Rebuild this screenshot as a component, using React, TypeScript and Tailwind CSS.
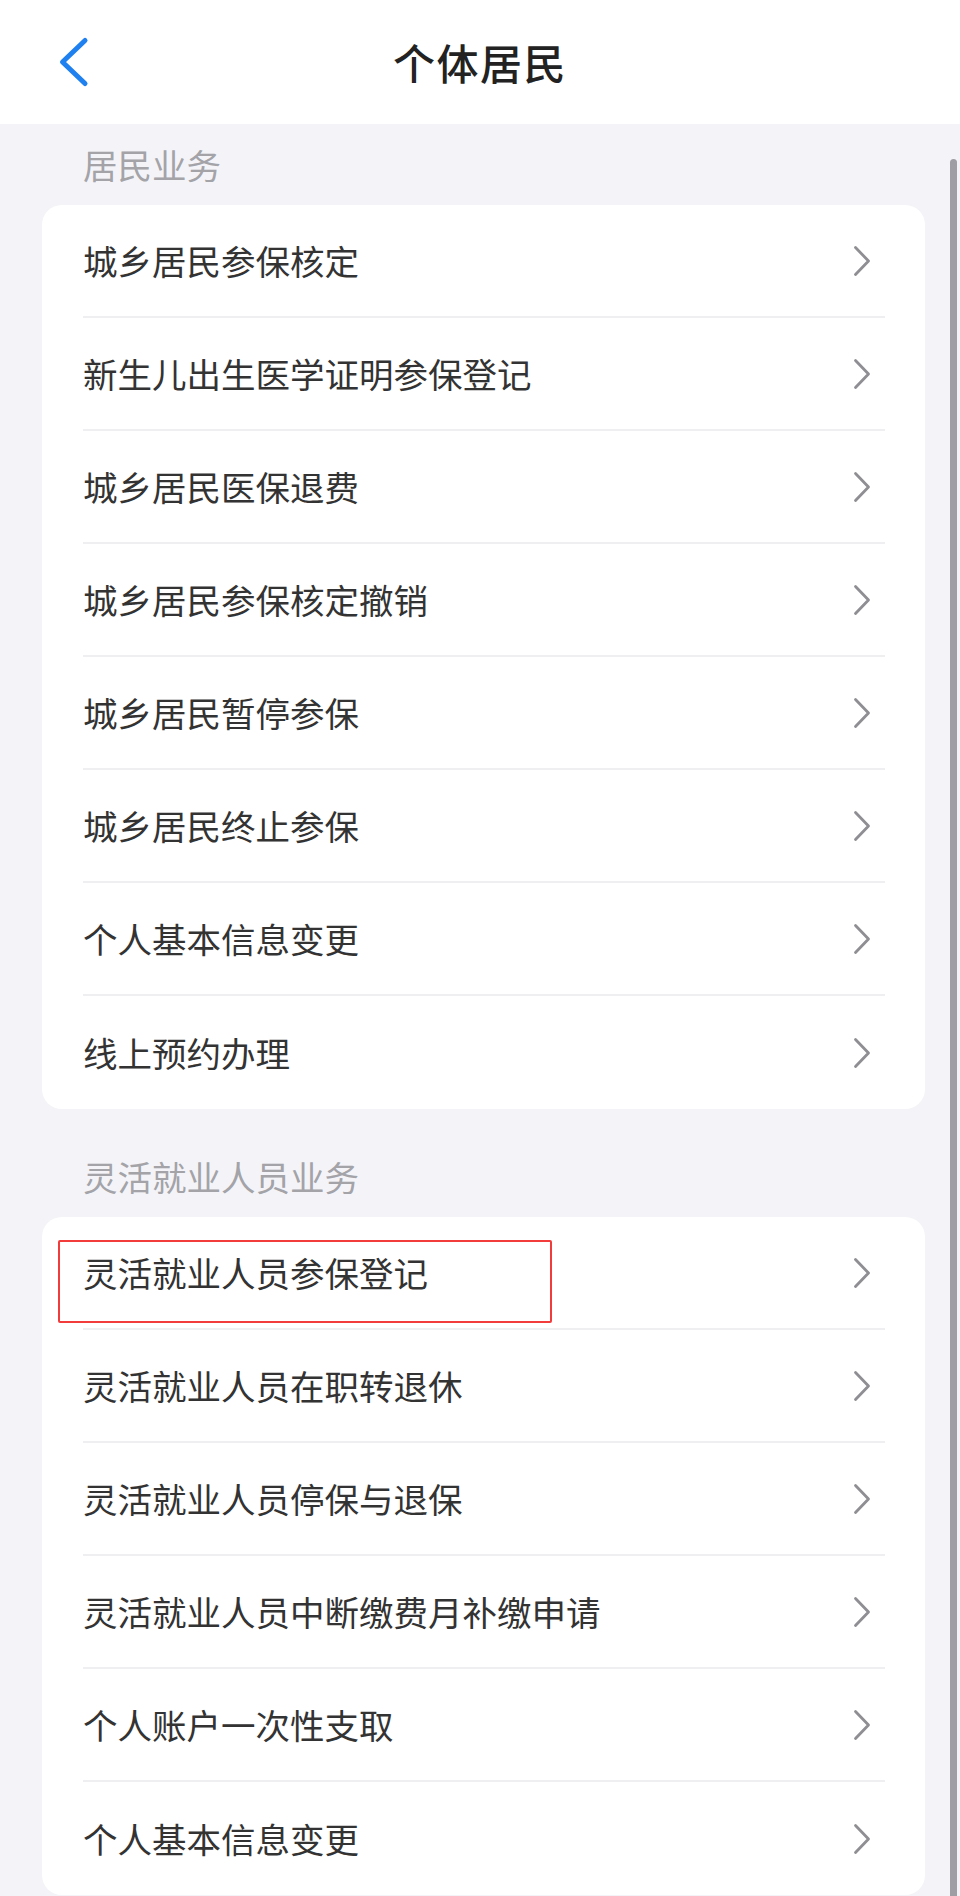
import React from 'react';

const residentItems = [
  '城乡居民参保核定',
  '新生儿出生医学证明参保登记',
  '城乡居民医保退费',
  '城乡居民参保核定撤销',
  '城乡居民暂停参保',
  '城乡居民终止参保',
  '个人基本信息变更',
  '线上预约办理',
];

const flexibleItems = [
  '灵活就业人员参保登记',
  '灵活就业人员在职转退休',
  '灵活就业人员停保与退保',
  '灵活就业人员中断缴费月补缴申请',
  '个人账户一次性支取',
  '个人基本信息变更',
];

function ChevronRight() {
  return (
    <svg width="20" height="32" viewBox="0 0 20 32" fill="none" className="mr-[13px] shrink-0">
      <path d="M3.5 2.5 L16.5 16 L3.5 29.5" stroke="#8e8e93" strokeWidth="2.8" strokeLinecap="round" strokeLinejoin="round" />
    </svg>
  );
}

function Section({ title, items, highlight, first }: { title: string; items: string[]; highlight?: number; first?: boolean }) {
  return (
    <div className={first ? '' : 'mt-[27px]'}>
      <div className="h-[81px] flex items-center pl-[83px] text-[34.5px] leading-none text-[#a3a3a8]">{title}</div>
      <div className="relative ml-[42px] mr-[35px] bg-white rounded-[20px]">
        {items.map((t, i) => (
          <div
            key={t + i}
            className={`ml-[41px] mr-[40px] h-[113px] flex items-center justify-between ${i < items.length - 1 ? 'border-b-2 border-[#efeff2]' : ''}`}
          >
            <span className="text-[34.5px] leading-none text-[#333333]">{t}</span>
            <ChevronRight />
          </div>
        ))}
        {highlight !== undefined && (
          <div
            className="absolute left-[16px] w-[494px] h-[83px] border-2 border-[#f23b3b] rounded-[2px] pointer-events-none"
            style={{ top: 23 + highlight * 113 }}
          />
        )}
      </div>
    </div>
  );
}

export default function App() {
  return (
    <div className="relative w-[960px] h-[1896px] overflow-hidden bg-[#f4f4f8] font-['Noto_Sans_CJK_SC',sans-serif]">
      {/* Nav bar */}
      <div className="h-[124px] bg-white grid grid-cols-[1fr_auto_1fr] items-center">
        <div className="pl-[58px] flex items-center">
          <svg width="32" height="52" viewBox="0 0 32 52" fill="none">
            <path d="M27 4.5 L4.5 26 L27 47.5" stroke="#1f80f0" strokeWidth="5" strokeLinecap="round" strokeLinejoin="round" />
          </svg>
        </div>
        <h1 className="text-[42px] font-medium leading-none text-[#222222] tracking-[1.5px]">个体居民</h1>
        <div />
      </div>

      <Section title="居民业务" items={residentItems} first />
      <Section title="灵活就业人员业务" items={flexibleItems} highlight={0} />

      {/* scroll indicator */}
      <div className="absolute left-[950px] top-[159px] bottom-[-10px] w-[7px] rounded-full bg-[#9e9ea4]" />
    </div>
  );
}
